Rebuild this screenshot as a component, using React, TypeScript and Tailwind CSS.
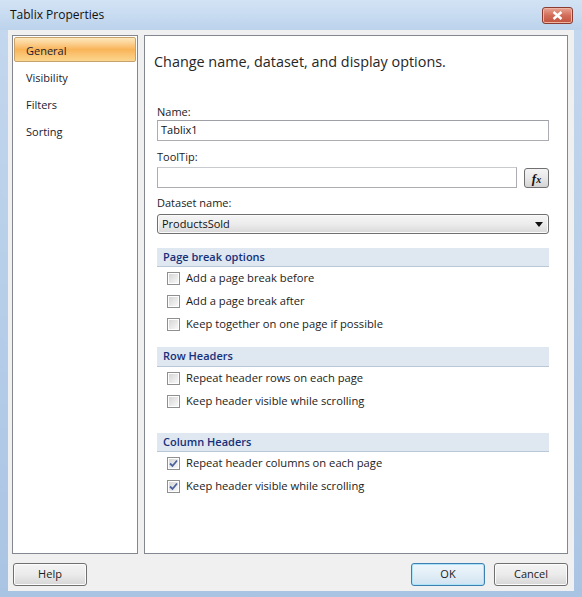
import React from "react";

const font = "font-['Open_Sans','Liberation_Sans',sans-serif]";

const CheckBox = ({ checked }: { checked?: boolean }) => (
  <div className="w-[13px] h-[13px] border border-[#8e8f8f] bg-white p-[1px] shrink-0">
    <div className="w-full h-full bg-gradient-to-br from-[#d6d6d6] to-[#f8f8f8] flex items-center justify-center">
      {checked && (
        <svg width="9" height="9" viewBox="0 0 9 9">
          <path d="M1 4.5 L3.5 7 L8 1.5" fill="none" stroke="#4b62a0" strokeWidth="1.8" />
        </svg>
      )}
    </div>
  </div>
);

const Option = ({ label, checked }: { label: string; checked?: boolean }) => (
  <div className="h-[23px] flex items-center pl-[10px] gap-[6px]">
    <CheckBox checked={checked} />
    <span className="text-[11.2px] text-[#1b1b1b]">{label}</span>
  </div>
);

const SectionHeader = ({ title, className }: { title: string; className: string }) => (
  <div className={`bg-[#dfe7f0] border-b border-[#b9c7d6] flex items-center pl-[6px] ${className}`}>
    <span className="text-[11px] font-semibold text-[#15307a]">{title}</span>
  </div>
);

const Button = ({ label, primary }: { label: string; primary?: boolean }) => (
  <button
    className={`w-[74px] h-[23px] rounded-[3px] border text-[11px] text-[#1b1b1b] ${
      primary
        ? "border-[#3c7fb1] bg-gradient-to-b from-[#eef6fb] via-[#e2eef7] to-[#cfe3f1] shadow-[inset_0_0_0_1px_#aee4f8]"
        : "border-[#707070] bg-gradient-to-b from-[#f4f4f4] via-[#ebebeb] to-[#d6d6d6] shadow-[inset_0_0_0_1px_#fcfcfc]"
    }`}
  >
    {label}
  </button>
);

export default function App() {
  const navItems = ["General", "Visibility", "Filters", "Sorting"];

  return (
    <div className={`w-[582px] h-[597px] flex flex-col bg-gradient-to-b from-[#c4d8ee] to-[#a9c4e3] ${font}`}>
      {/* title bar */}
      <div className="h-[30px] flex items-center justify-between pl-[10px] pr-[9px] bg-gradient-to-b from-[#d3e3f5] to-[#bcd3ec]">
        <span className="text-[12px] text-[#111]">Tablix Properties</span>
        <div className="w-[31px] h-[17px] rounded-[3px] border border-[#8a3b32] bg-gradient-to-b from-[#e8a493] via-[#d26d5a] to-[#c0523d] flex items-center justify-center shadow-[inset_0_0_0_1px_#eeb4a4]">
          <svg width="11" height="9" viewBox="0 0 11 9">
            <path d="M1.5 1 L9.5 8 M9.5 1 L1.5 8" stroke="#fff" strokeWidth="2.4" />
          </svg>
        </div>
      </div>

      {/* body */}
      <div className="flex-1 mx-[8px] mb-[6px] bg-[#f0f0f0] flex flex-col pt-[5px] pl-[4px] pr-[6px]">
        <div className="flex gap-[6px] h-[519px]">
          {/* nav */}
          <div className="w-[126px] border border-[#828790] bg-white p-[1px] flex flex-col gap-[2px]">
            {navItems.map((item, i) => (
              <div
                key={item}
                className={`h-[25px] flex items-center pl-[11px] pt-[3px] text-[11px] text-[#1a1a2e] ${
                  i === 0
                    ? "rounded-[2px] border border-[#c7a36b] bg-gradient-to-b from-[#fde9bd] via-[#f9b458] to-[#fbd68f]"
                    : "border border-transparent"
                }`}
              >
                {item}
              </div>
            ))}
          </div>

          {/* main panel */}
          <div className="w-[424px] border border-[#828790] bg-white pt-[17px] pl-[12px] pr-[18px] flex flex-col">
            <div className="h-[18px] -ml-[3px] flex items-center text-[14.4px] text-[#262626]">
              Change name, dataset, and display options.
            </div>

            <div className="mt-[34px] h-[14px] flex items-center text-[11px] text-[#1b1b1b]">Name:</div>
            <div className="mt-[1px] h-[21px] border border-[#abadb3] border-t-[#9ea0a6] flex items-center pl-[3px] text-[11px] text-[#111]">
              Tablix1
            </div>

            <div className="mt-[9px] h-[14px] flex items-center text-[11px] text-[#1b1b1b]">ToolTip:</div>
            <div className="mt-[3px] flex gap-[7px]">
              <div className="flex-1 h-[21px] border border-[#abadb3] border-t-[#c8cace]" />
              <div className="w-[25px] h-[20px] mt-[1px] rounded-[3px] border border-[#707070] bg-gradient-to-b from-[#f4f4f4] via-[#e8e8e8] to-[#d4d4d4] flex items-center justify-center">
                <span className="font-['Liberation_Serif',serif] italic font-bold text-[13px] leading-none text-[#111]">
                  f<span className="text-[10px]">x</span>
                </span>
              </div>
            </div>

            <div className="mt-[8px] h-[14px] flex items-center text-[11px] text-[#1b1b1b]">Dataset name:</div>
            <div className="mt-[4px] h-[20px] rounded-[3px] border border-[#707070] bg-gradient-to-b from-[#f5f5f5] via-[#ececec] to-[#d9d9d9] flex items-center justify-between pl-[4px] pr-[5px] shadow-[inset_0_0_0_1px_#fbfbfb]">
              <span className="text-[11px] text-[#111]">ProductsSold</span>
              <svg width="8" height="5" viewBox="0 0 8 5">
                <path d="M0 0 H8 L4 5 Z" fill="#111" />
              </svg>
            </div>

            <SectionHeader title="Page break options" className="mt-[14px] h-[19px]" />
            <Option label="Add a page break before" />
            <Option label="Add a page break after" />
            <Option label="Keep together on one page if possible" />

            <SectionHeader title="Row Headers" className="mt-[11px] h-[20px]" />
            <Option label="Repeat header rows on each page" />
            <Option label="Keep header visible while scrolling" />

            <SectionHeader title="Column Headers" className="mt-[20px] h-[19px]" />
            <Option label="Repeat header columns on each page" checked />
            <Option label="Keep header visible while scrolling" checked />
          </div>
        </div>

        {/* footer */}
        <div className="mt-[9px] flex items-center pl-[1px]">
          <Button label="Help" />
          <div className="flex-1" />
          <div className="flex gap-[9px]">
            <Button label="OK" primary />
            <Button label="Cancel" />
          </div>
        </div>
      </div>
    </div>
  );
}
